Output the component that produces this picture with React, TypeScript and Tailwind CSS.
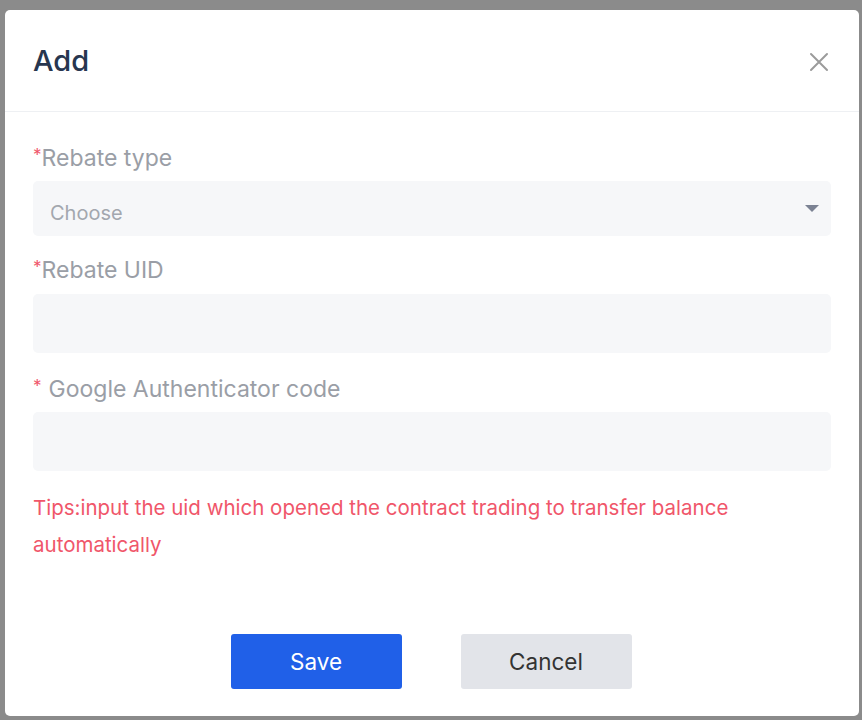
import React from 'react'

const font = { fontFamily: 'Inter, "Noto Sans", sans-serif' }

function Label({ text, spaced }: { text: string; spaced?: boolean }) {
  return (
    <div className="flex h-[28px] items-center text-[23px] leading-[28px] text-[#9a9ea6]">
      <span className="self-start text-[17px] leading-[22px] text-[#f0566a]">*</span>
      {spaced && <span className="w-[7px]" />}
      <span>{text}</span>
    </div>
  )
}

export default function App() {
  return (
    <div className="h-[720px] w-[862px] bg-[#8b8b8b] pl-[5px] pr-[3px] pt-[10px] pb-[4px]" style={font}>
      <div className="flex h-full flex-col rounded-[5px] bg-white">
        <div className="flex h-[102px] items-center justify-between border-b border-[#eef0f3] pl-[28px] pr-[30px]">
          <h2 className="text-[29px] font-medium text-[#27364f]">Add</h2>
          <svg width="20" height="20" viewBox="0 0 20 20" className="mt-[2px]">
            <path d="M2 2 L18 18 M18 2 L2 18" stroke="#9b9b9b" strokeWidth="2" strokeLinecap="round" />
          </svg>
        </div>

        <div className="flex flex-1 flex-col px-[28px] pt-[32px]">
          <Label text="Rebate type" />
          <div className="mt-[9px] flex h-[55px] items-center justify-between rounded-[5px] bg-[#f6f7f9] pl-[17px] pr-[12px]">
            <span className="mt-[8px] text-[20px] text-[#a3a7ae]">Choose</span>
            <svg width="14" height="8" viewBox="0 0 14 8">
              <path d="M0 0 H14 L7 7 Z" fill="#7b8293" />
            </svg>
          </div>

          <div className="mt-[20px]">
            <Label text="Rebate UID" />
          </div>
          <div className="mt-[10px] h-[59px] rounded-[5px] bg-[#f6f7f9]" />

          <div className="mt-[22px]">
            <Label text="Google Authenticator code" spaced />
          </div>
          <div className="mt-[9px] h-[59px] rounded-[5px] bg-[#f6f7f9]" />

          <p className="mt-[18px] text-[20.5px] leading-[37px] text-[#f0566a]">
            Tips:input the uid which opened the contract trading to transfer balance automatically
          </p>

          <div className="mt-auto mb-[27px] flex justify-center gap-[59px] pr-[2px]">
            <button className="h-[55px] w-[171px] rounded-[3px] bg-[#2060e8] text-[22.5px] text-white">Save</button>
            <button className="h-[55px] w-[171px] rounded-[3px] bg-[#e2e4e9] text-[22.5px] text-[#333333]">Cancel</button>
          </div>
        </div>
      </div>
    </div>
  )
}
